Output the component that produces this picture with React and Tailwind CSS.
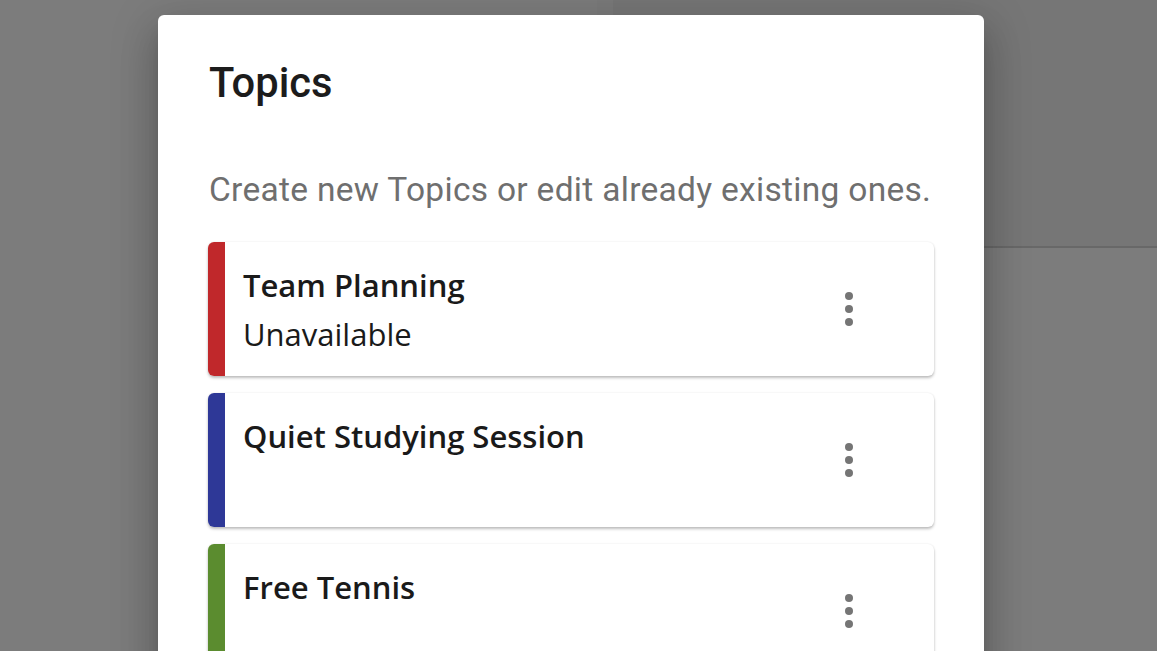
import React from "react";

function Kebab() {
  return (
    <svg width="52" height="52" viewBox="0 0 24 24" fill="#757575">
      <circle cx="12" cy="6" r="1.85" />
      <circle cx="12" cy="12" r="1.85" />
      <circle cx="12" cy="18" r="1.85" />
    </svg>
  );
}

function TopicCard({ color, title, subtitle }) {
  return (
    <div className="flex h-[134px] shrink-0 overflow-hidden rounded-[6px] bg-white shadow-[0_2px_3px_rgba(0,0,0,0.25),0_0_2px_rgba(0,0,0,0.08)]">
      <div className={`w-[17px] shrink-0 ${color}`} />
      <div className="flex flex-1 items-center justify-between pl-[18px] pr-[59px]">
        <div className="flex h-full flex-col pt-[19px] font-['Open_Sans',sans-serif] text-[31px] leading-[49px] text-[#1a1a1a]">
          <div className="font-semibold">{title}</div>
          {subtitle && <div>{subtitle}</div>}
        </div>
        <Kebab />
      </div>
    </div>
  );
}

export default function App() {
  return (
    <div className="relative h-[651px] w-[1157px] overflow-hidden bg-[#7c7c7c]">
      <div className="absolute left-[597px] top-0 h-[30px] w-[16px] bg-[#7a7a7a]" />
      <div className="absolute left-[613px] top-0 h-[247px] w-[544px] bg-[#767676]" />
      <div className="absolute left-[613px] top-[246px] h-[2px] w-[544px] bg-[#686868]" />
      <div className="relative ml-[158px] mt-[15px] h-[700px] w-[826px] rounded-[6px] bg-white shadow-[0_11px_15px_-7px_rgba(0,0,0,0.2),0_24px_38px_3px_rgba(0,0,0,0.14),0_9px_46px_8px_rgba(0,0,0,0.12)]">
        <div className="pl-[51px] pr-[40px] pt-[36px] font-['Roboto',sans-serif]">
          <h2 className="text-[41.7px] font-medium leading-[64px] text-[#1c1c1c]">Topics</h2>
          <p className="mt-[51px] whitespace-nowrap text-[33.5px] leading-[48px] tracking-[0.3px] text-[#6f6f6f]">
            Create new Topics or edit already existing ones.
          </p>
        </div>
        <div className="mt-[28px] flex flex-col gap-[17px] px-[50px]">
          <TopicCard color="bg-[#c0282b]" title="Team Planning" subtitle="Unavailable" />
          <TopicCard color="bg-[#2e3897]" title="Quiet Studying Session" />
          <TopicCard color="bg-[#5b8c2f]" title="Free Tennis" />
        </div>
      </div>
    </div>
  );
}
